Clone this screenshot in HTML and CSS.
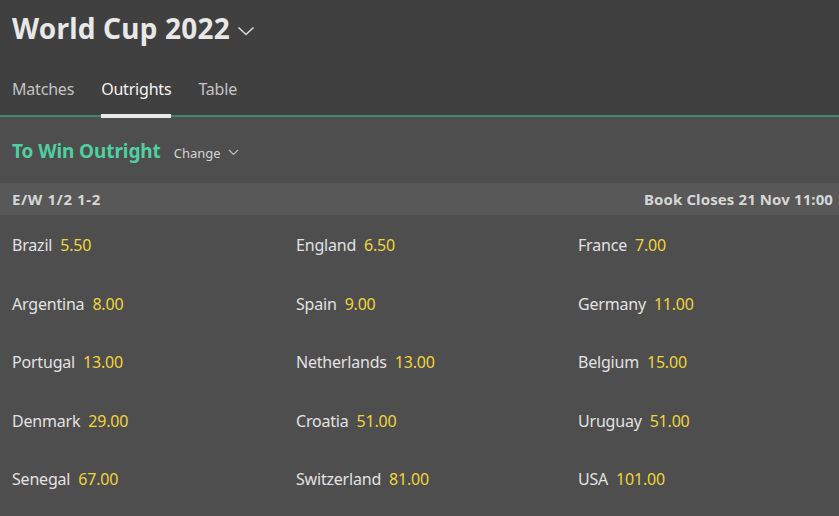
FILE: index.html
```html
<!DOCTYPE html>
<html>
<head>
<meta charset="utf-8">
<link rel="stylesheet" href="styles.css">
</head>
<body>
<header class="top">
  <div class="title-row">
    <h1 class="title">World Cup 2022</h1>
    <svg class="title-chev" width="18" height="10" viewBox="0 0 18 10"><path d="M1.5 1.5 L9 8.5 L16.5 1.5" fill="none" stroke="#d8d8d8" stroke-width="1.6"/></svg>
  </div>
  <nav class="tabs">
    <span class="tab">Matches</span>
    <span class="tab active">Outrights</span>
    <span class="tab">Table</span>
  </nav>
</header>
<section class="market">
  <div class="market-head">
    <span class="market-title">To Win Outright</span>
    <span class="change">Change</span>
    <svg class="change-chev" width="11" height="7" viewBox="0 0 11 7"><path d="M1 1 L5.5 5.5 L10 1" fill="none" stroke="#bdbdbd" stroke-width="1.2"/></svg>
  </div>
  <div class="strip">
    <span>E/W 1/2 1-2</span>
    <span>Book Closes 21 Nov 11:00</span>
  </div>
  <div class="grid">
    <div class="sel"><span class="name">Brazil</span><span class="odds">5.50</span></div>
    <div class="sel"><span class="name">England</span><span class="odds">6.50</span></div>
    <div class="sel"><span class="name">France</span><span class="odds">7.00</span></div>
    <div class="sel"><span class="name">Argentina</span><span class="odds">8.00</span></div>
    <div class="sel"><span class="name">Spain</span><span class="odds">9.00</span></div>
    <div class="sel"><span class="name">Germany</span><span class="odds">11.00</span></div>
    <div class="sel"><span class="name">Portugal</span><span class="odds">13.00</span></div>
    <div class="sel"><span class="name">Netherlands</span><span class="odds">13.00</span></div>
    <div class="sel"><span class="name">Belgium</span><span class="odds">15.00</span></div>
    <div class="sel"><span class="name">Denmark</span><span class="odds">29.00</span></div>
    <div class="sel"><span class="name">Croatia</span><span class="odds">51.00</span></div>
    <div class="sel"><span class="name">Uruguay</span><span class="odds">51.00</span></div>
    <div class="sel"><span class="name">Senegal</span><span class="odds">67.00</span></div>
    <div class="sel"><span class="name">Switzerland</span><span class="odds">81.00</span></div>
    <div class="sel"><span class="name">USA</span><span class="odds">101.00</span></div>
  </div>
</section>
</body>
</html>
```
FILE: styles.css
```css
* { box-sizing: border-box; }
html, body { margin: 0; padding: 0; }
body {
  width: 839px;
  height: 516px;
  overflow: hidden;
  background: #4e4e4e;
  font-family: "Noto Sans", "Open Sans", sans-serif;
  color: #e6e6e6;
}
.top {
  background: #404040;
  border-bottom: 2px solid #3f8a6b;
  height: 117px;
  display: flex;
  flex-direction: column;
}
.title-row {
  display: flex;
  align-items: center;
  padding: 8px 0 0 12px;
  height: 48px;
}
.title {
  margin: 0;
  font-size: 28px;
  font-weight: 700;
  color: #e8e8e8;
  letter-spacing: 0.2px;
}
.title-chev { margin-left: 7px; margin-top: 6px; }
.tabs {
  display: flex;
  gap: 27px;
  padding-left: 12px;
  margin-top: auto;
}
.tab {
  font-size: 16px;
  color: #c4c4c4;
  padding-bottom: 14px;
  border-bottom: 4px solid transparent;
  margin-bottom: -3px;
  letter-spacing: -0.2px;
}
.tab.active {
  color: #f4f4f4;
  border-bottom-color: #e8e8e8;
}
.market-head {
  display: flex;
  align-items: center;
  height: 66px;
  padding: 2px 0 0 12px;
}
.market-title {
  font-size: 19px;
  font-weight: 700;
  color: #4fd0a0;
  letter-spacing: -0.1px;
}
.change {
  font-size: 13px;
  color: #d4d4d4;
  margin-left: 13px;
  margin-top: 3px;
}
.change-chev { margin-left: 7px; margin-top: 3px; }
.strip {
  display: flex;
  justify-content: space-between;
  align-items: center;
  height: 32px;
  padding: 0 6px 0 12px;
  background: #585858;
  font-size: 15px;
  font-weight: 700;
  color: #d6d6d6;
}
.strip span:first-child { letter-spacing: 0.6px; }
.strip span:last-child { letter-spacing: 0.1px; }
.grid {
  display: grid;
  grid-template-columns: 284px 282px 1fr;
  grid-auto-rows: 58.5px;
  padding: 0 0 0 12px;
}
.sel {
  display: flex;
  align-items: center;
  gap: 8px;
  font-size: 16px;
  height: 60px;
}
.name { color: #e2e2e2; letter-spacing: -0.2px; }
.odds { color: #f0d43a; letter-spacing: -0.2px; }
```
